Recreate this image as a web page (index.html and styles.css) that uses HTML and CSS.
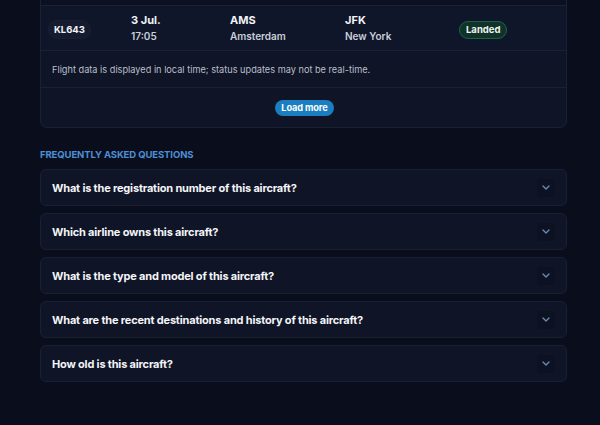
FILE: index.html
```html
<!DOCTYPE html>
<html lang="en">
<head>
<meta charset="utf-8">
<title>Aircraft flights</title>
<link rel="stylesheet" href="styles.css">
</head>
<body>
<main class="page">
  <section class="card">
    <div class="row-prev"></div>
    <div class="flight-row">
      <div class="cell"><span class="flight-no">KL643</span></div>
      <div class="cell stack"><span class="main">3 Jul.</span><span class="sub">17:05</span></div>
      <div class="cell stack"><span class="main">AMS</span><span class="sub">Amsterdam</span></div>
      <div class="cell stack"><span class="main">JFK</span><span class="sub">New York</span></div>
      <div class="cell"><span class="status">Landed</span></div>
    </div>
    <p class="notice">Flight data is displayed in local time; status updates may not be real-time.</p>
    <div class="more-row"><button class="more-btn">Load more</button></div>
  </section>

  <section class="faq">
    <h2 class="faq-title">Frequently asked questions</h2>
    <div class="faq-list">
      <div class="faq-item"><span>What is the registration number of this aircraft?</span><span class="chev"><svg width="8" height="5" viewBox="0 0 8 5"><path d="M1 1l3 3 3-3" fill="none" stroke="currentColor" stroke-width="1.3" stroke-linecap="round" stroke-linejoin="round"/></svg></span></div>
      <div class="faq-item"><span>Which airline owns this aircraft?</span><span class="chev"><svg width="8" height="5" viewBox="0 0 8 5"><path d="M1 1l3 3 3-3" fill="none" stroke="currentColor" stroke-width="1.3" stroke-linecap="round" stroke-linejoin="round"/></svg></span></div>
      <div class="faq-item"><span>What is the type and model of this aircraft?</span><span class="chev"><svg width="8" height="5" viewBox="0 0 8 5"><path d="M1 1l3 3 3-3" fill="none" stroke="currentColor" stroke-width="1.3" stroke-linecap="round" stroke-linejoin="round"/></svg></span></div>
      <div class="faq-item"><span>What are the recent destinations and history of this aircraft?</span><span class="chev"><svg width="8" height="5" viewBox="0 0 8 5"><path d="M1 1l3 3 3-3" fill="none" stroke="currentColor" stroke-width="1.3" stroke-linecap="round" stroke-linejoin="round"/></svg></span></div>
      <div class="faq-item"><span>How old is this aircraft?</span><span class="chev"><svg width="8" height="5" viewBox="0 0 8 5"><path d="M1 1l3 3 3-3" fill="none" stroke="currentColor" stroke-width="1.3" stroke-linecap="round" stroke-linejoin="round"/></svg></span></div>
    </div>
  </section>
</main>
</body>
</html>
```

FILE: styles.css
```css
* { box-sizing: border-box; }
html, body { margin: 0; padding: 0; }
body {
  background: #0a0e1c;
  font-family: Inter, "Noto Sans", sans-serif;
  color: #e8ebf2;
  width: 600px;
  height: 425px;
  overflow: hidden;
}
.page {
  width: 527px;
  margin-left: 40px;
}
.card {
  margin-top: -1px;
  background: #0f1426;
  border: 1px solid #1b2135;
  border-radius: 0 0 7px 7px;
}
.row-prev {
  height: 6px;
  background: #0c1121;
  border-bottom: 1px solid #1b2135;
}
.flight-row {
  display: grid;
  grid-template-columns: 83px 99px 115px 114px 1fr;
  align-items: center;
  height: 45px;
  padding-left: 7px;
  background: #10162a;
  border-bottom: 1px solid #1b2135;
}
.stack { display: flex; flex-direction: column; gap: 5px; }
.main { font-size: 11px; font-weight: 700; color: #f1f3f7; line-height: 12px; }
.sub { font-size: 10px; font-weight: 600; color: #c9ced8; line-height: 11px; }
.flight-no {
  display: inline-block;
  font-size: 9.5px;
  font-weight: 700;
  color: #f1f3f7;
  background: #161c30;
  border: 1px solid #1a2034;
  padding: 3px 5px;
  border-radius: 9px;
  line-height: 11px;
}
.status {
  display: inline-block;
  font-size: 9.5px;
  font-weight: 700;
  color: #eef3f0;
  background: #0f3328;
  border: 1px solid #1f6148;
  padding: 2px 6px;
  border-radius: 9px;
  line-height: 12px;
}
.notice {
  margin: 0;
  height: 37px;
  display: flex;
  align-items: center;
  padding-left: 11px;
  font-size: 9.2px;
  color: #b9bfca;
  border-bottom: 1px solid #1b2135;
}
.more-row {
  height: 39px;
  display: flex;
  justify-content: center;
  align-items: center;
  padding-left: 2px;
}
.more-btn {
  font-family: inherit;
  font-size: 9.2px;
  font-weight: 700;
  color: #ffffff;
  background: #1b7ec0;
  border: none;
  border-radius: 9px;
  padding: 2px 6px;
  line-height: 12px;
  letter-spacing: -0.1px;
}
.faq { margin-top: 21px; }
.faq-title {
  margin: 0 0 8px;
  font-size: 9.5px;
  font-weight: 700;
  text-transform: uppercase;
  color: #4d8fd6;
  letter-spacing: -0.1px;
  line-height: 12px;
}
.faq-list { display: flex; flex-direction: column; gap: 7px; }
.faq-item {
  height: 37px;
  display: flex;
  align-items: center;
  justify-content: space-between;
  padding: 0 11px 0 11px;
  background: #0f1426;
  border: 1px solid #1a2034;
  border-radius: 6px;
  font-size: 11px;
  font-weight: 700;
  letter-spacing: -0.18px;
  color: #f3f5f8;
}
.chev {
  width: 18px;
  height: 18px;
  display: flex;
  align-items: center;
  justify-content: center;
  border-radius: 4px;
  background: #0d1223;
  color: #6c8cb8;
}
```
